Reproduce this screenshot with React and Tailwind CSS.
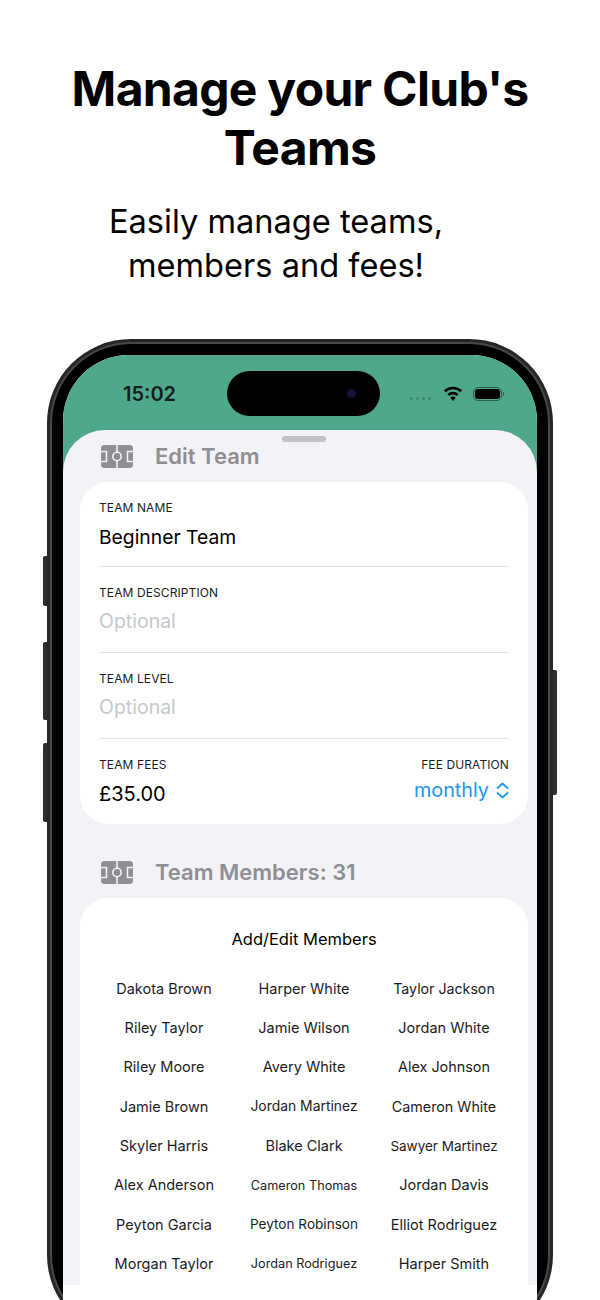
const members = [
  ['Dakota Brown', 'text-[14.5px]'],
  ['Harper White', 'text-[14.5px]'],
  ['Taylor Jackson', 'text-[14.2px]'],
  ['Riley Taylor', 'text-[14.5px]'],
  ['Jamie Wilson', 'text-[14.5px]'],
  ['Jordan White', 'text-[14.5px]'],
  ['Riley Moore', 'text-[14.5px]'],
  ['Avery White', 'text-[14.5px]'],
  ['Alex Johnson', 'text-[14.4px]'],
  ['Jamie Brown', 'text-[14.5px]'],
  ['Jordan Martinez', 'text-[13.9px]'],
  ['Cameron White', 'text-[14.3px]'],
  ['Skyler Harris', 'text-[14.5px]'],
  ['Blake Clark', 'text-[14.5px]'],
  ['Sawyer Martinez', 'text-[13.5px]'],
  ['Alex Anderson', 'text-[14.5px]'],
  ['Cameron Thomas', 'text-[12.7px]'],
  ['Jordan Davis', 'text-[14.5px]'],
  ['Peyton Garcia', 'text-[14.5px]'],
  ['Peyton Robinson', 'text-[13.6px]'],
  ['Elliot Rodriguez', 'text-[14.5px]'],
  ['Morgan Taylor', 'text-[14.5px]'],
  ['Jordan Rodriguez', 'text-[12.7px]'],
  ['Harper Smith', 'text-[14.5px]'],
]

function PitchIcon() {
  return (
    <svg width="32" height="23" viewBox="0 0 32 23" className="shrink-0">
      <rect width="32" height="23" rx="3.500" fill="#8e8e93" />
      <g fill="none" stroke="#f2f2f7" strokeWidth="1.600">
        <path d="M16 0V23" />
        <path d="M-1 6.500H5.500V16.500H-1" />
        <path d="M33 6.500H26.500V16.500H33" />
        <circle cx="16" cy="11.500" r="4.200" fill="#8e8e93" />
      </g>
      <circle cx="16" cy="11.500" r="1.500" fill="#8e8e93" />
    </svg>
  )
}

function SectionHeader({ title, className }) {
  return (
    <div className={`flex items-center gap-[22px] ml-[21px] h-[48px] ${className}`}>
      <PitchIcon />
      <span className="text-[22px] font-semibold text-[#8e8e93] leading-none">{title}</span>
    </div>
  )
}

function Label({ children }) {
  return <div className="text-[12px] leading-4 tracking-[0.1px] text-[#1c1c1e]">{children}</div>
}

function Field({ label, value, placeholder }) {
  return (
    <div className={`border-b border-[#e3e3e6] pt-[18px] ${placeholder ? 'pb-[16px]' : 'pb-[14px]'}`}>
      <Label>{label}</Label>
      <div className={`leading-[30px] ${placeholder ? 'mt-[5px] text-[19.500px] text-[#c7c7cc]' : 'mt-[6px] text-[19.300px] text-black'}`}>
        {value}
      </div>
    </div>
  )
}

function StatusBar() {
  return (
    <div className="relative h-[75px] bg-[#4fa88b]">
      <div className="absolute left-[60px] top-[27px] text-[20px] font-semibold leading-6 text-[#10201a]">15:02</div>
      <div className="absolute left-[164px] top-[16px] flex h-[45px] w-[153px] items-center justify-end rounded-full bg-black pr-[24px]">
        <div className="h-[9px] w-[9px] rounded-full bg-[#14143a]" />
      </div>
      <div className="absolute left-[347px] top-[42px] flex gap-[3px]">
        <div className="h-[3px] w-[3px] rounded-full bg-[#3d8a72]" />
        <div className="h-[3px] w-[3px] rounded-full bg-[#3d8a72]" />
        <div className="h-[3px] w-[3px] rounded-full bg-[#3d8a72]" />
        <div className="h-[3px] w-[3px] rounded-full bg-[#3d8a72]" />
      </div>
      <svg className="absolute left-[380px] top-[31px]" width="20" height="15" viewBox="0 0 20 15">
        <path d="M1.800 5.300A11.800 11.800 0 0 1 18.200 5.300" fill="none" stroke="#000" strokeWidth="2.600" />
        <path d="M5.200 9A7 7 0 0 1 14.800 9" fill="none" stroke="#000" strokeWidth="2.600" />
        <path d="M10 10.500c-1.100 0-2 .4-2.800 1.200L10 15l2.800-3.300C12 10.900 11.100 10.500 10 10.500Z" fill="#000" />
      </svg>
      <div className="absolute left-[410px] top-[32px] flex items-center">
        <div className="h-[14px] w-[29px] rounded-[5px] border border-[#2c5c4b] p-[1px]">
          <div className="h-full w-full rounded-[3px] bg-black" />
        </div>
        <div className="ml-[1px] h-[4px] w-[1px] bg-[#2c5c4b]" />
      </div>
    </div>
  )
}

export default function App() {
  return (
    <div className="relative h-[1300px] w-[600px] overflow-hidden bg-white font-['Inter',sans-serif] text-black">
      <h1 className="pt-[59px] text-center text-[48px] font-bold leading-[59px] tracking-[-0.7px]">
        Manage your Club's
        <br />
        Teams
      </h1>
      <p className="mt-[22px] w-[552px] text-center text-[32.600px] leading-[44px]">
        Easily manage teams,
        <br />
        members and fees!
      </p>

      <div className="relative ml-[47px] mt-[52px] h-[1000px] w-[506px]">
        {/* side buttons */}
        <div className="absolute -left-[4px] top-[217px] h-[50px] w-[4px] rounded-l-[2px] bg-[#2f2f31]" />
        <div className="absolute -left-[4px] top-[303px] h-[78px] w-[4px] rounded-l-[2px] bg-[#2f2f31]" />
        <div className="absolute -left-[4px] top-[404px] h-[79px] w-[4px] rounded-l-[2px] bg-[#2f2f31]" />
        <div className="absolute -right-[4px] top-[331px] h-[125px] w-[4px] rounded-r-[2px] bg-[#2f2f31]" />

        <div className="h-full rounded-[84px] bg-[#262626] p-[3px]">
          <div className="h-full rounded-[81px] bg-[#48484a] p-[2px]">
            <div className="h-full rounded-[79px] bg-black p-[11px]">
              <div className="h-full overflow-hidden rounded-t-[66px] bg-white">
                <StatusBar />
                <div className="bg-[#4fa88b]">
                  <div className="relative h-[855px] overflow-hidden rounded-t-[42px] bg-[#f2f2f7] pl-[17px] pr-[9px]">
                    <div className="absolute left-[219px] top-[6px] h-[6px] w-[44px] rounded-full bg-[#c2c2c5]" />
                    <SectionHeader title="Edit Team" className="mt-[2px] mb-[2px]" />

                    <div className="rounded-[28px] bg-white px-[19px]">
                      <Field label="TEAM NAME" value="Beginner Team" />
                      <Field label="TEAM DESCRIPTION" value="Optional" placeholder />
                      <Field label="TEAM LEVEL" value="Optional" placeholder />
                      <div className="flex justify-between pt-[18px] pb-[15px]">
                        <div>
                          <Label>TEAM FEES</Label>
                          <div className="mt-[6px] text-[20px] leading-[30px]">£35.00</div>
                        </div>
                        <div className="flex flex-col items-end">
                          <Label>FEE DURATION</Label>
                          <div className="mt-[2px] flex items-center gap-[7px] text-[19.800px] leading-[30px] text-[#2196f0]">
                            monthly
                            <svg width="13" height="17" viewBox="0 0 13 17" fill="none" stroke="#2196f0" strokeWidth="1.800" strokeLinecap="round" strokeLinejoin="round">
                              <path d="M1.500 6 6.500 1.500 11.500 6" />
                              <path d="M1.500 11 6.500 15.500 11.500 11" />
                            </svg>
                          </div>
                        </div>
                      </div>
                    </div>

                    <SectionHeader title="Team Members: 31" className="mt-[24px] mb-[2px]" />

                    <div className="rounded-t-[28px] bg-white px-[14px] pt-[29px] pb-[40px]">
                      <div className="text-center text-[16.500px] leading-6">Add/Edit Members</div>
                      <div className="mt-[18px] grid grid-cols-3 auto-rows-[39.300px]">
                        {members.map(([name, size]) => (
                          <div key={name} className={`flex items-center justify-center text-[#1c1c1e] ${size}`}>
                            {name}
                          </div>
                        ))}
                      </div>
                    </div>
                  </div>
                </div>
              </div>
            </div>
          </div>
        </div>
      </div>
    </div>
  )
}
